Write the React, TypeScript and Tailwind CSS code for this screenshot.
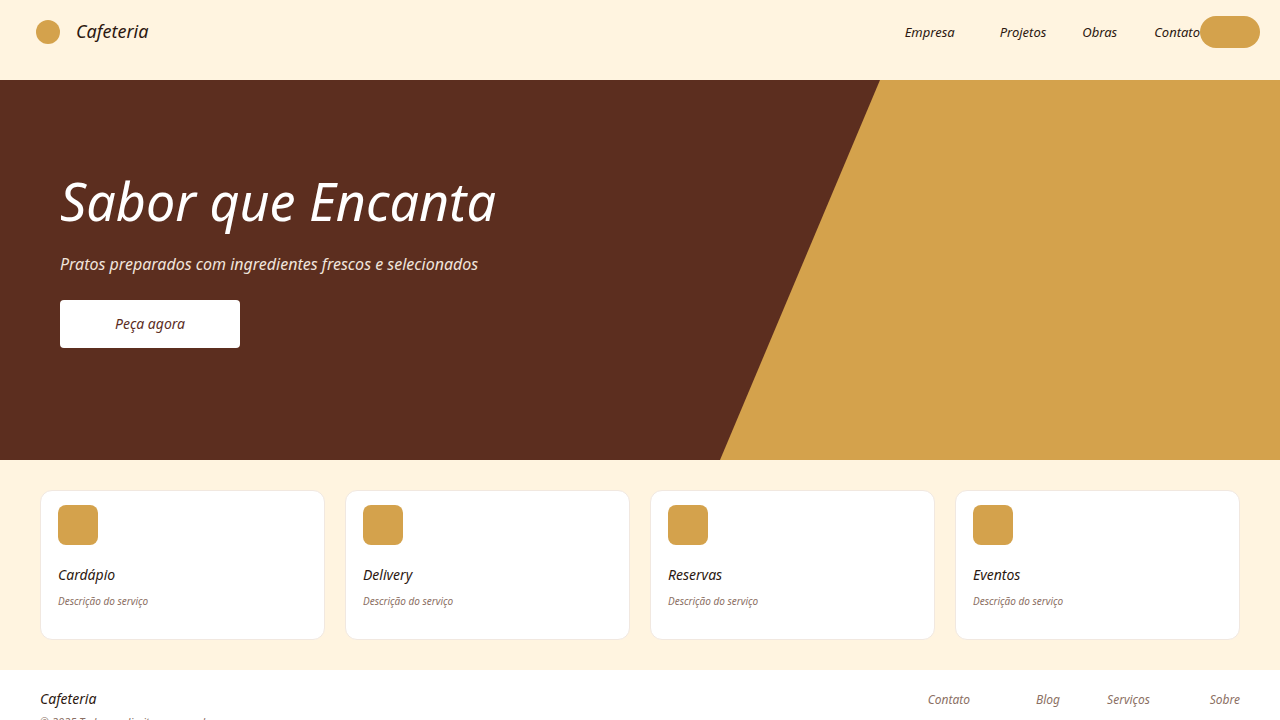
const font = "font-['Noto_Sans',sans-serif] italic";

function Card({ title }: { title: string }) {
  return (
    <div className="h-[150px] rounded-xl border border-[#f1e8e0] bg-white px-[17px] pt-[14px]">
      <div className="h-10 w-10 rounded-lg bg-[#d4a24c]" />
      <h3 className="mt-5 text-sm leading-5 text-[#2c1810]">{title}</h3>
      <p className="mt-[9px] text-[10px] leading-[14px] text-[#8b6f63]">Descrição do serviço</p>
    </div>
  );
}

export default function App() {
  return (
    <div className={`h-[720px] w-[1280px] overflow-hidden bg-[#fff4e0] opacity-[0.999] ${font}`}>
      <header className="flex h-20 items-start justify-between px-5 pt-4">
        <div className="flex h-8 items-center">
          <div className="ml-4 h-6 w-6 rounded-full bg-[#d4a24c]" />
          <span className="mb-0.5 ml-4 text-lg leading-7 text-[#2c1810]">Cafeteria</span>
        </div>
        <nav className="flex h-8 items-center text-[13px] text-[#2c1810]">
          <a className="mr-[45px] pt-0.5">Empresa</a>
          <a className="mr-[36px] pt-0.5">Projetos</a>
          <a className="mr-[37px] pt-0.5">Obras</a>
          <a className="pt-0.5">Contato</a>
          <div className="h-8 w-[60px] rounded-full bg-[#d4a24c]" />
        </nav>
      </header>
      <section className="relative h-[380px] bg-[#5c2e1f] pl-[60px] pt-[87px]">
        <div className="absolute inset-y-0 right-0 w-[560px] bg-[#d4a24c] [clip-path:polygon(160px_0,100%_0,100%_100%,0_100%)]" />
        <h1 className="text-[52px] leading-[68px] text-white">Sabor que Encanta</h1>
        <p className="mt-[17px] text-base leading-6 text-[#f0e4dc]">Pratos preparados com ingredientes frescos e selecionados</p>
        <button className="mt-[24px] block h-12 w-[180px] rounded bg-white text-sm italic text-[#5c2e1f]">Peça agora</button>
      </section>
      <section className="grid h-[210px] grid-cols-4 gap-5 px-10 pt-[30px]">
        <Card title="Cardápio" />
        <Card title="Delivery" />
        <Card title="Reservas" />
        <Card title="Eventos" />
      </section>
      <footer className="flex h-[50px] justify-between bg-white px-10 pt-[19px]">
        <div>
          <div className="text-sm leading-5 text-[#2c1810]">Cafeteria</div>
          <div className="mt-1.5 text-[11px] leading-[14px] text-[#8b6f63]">© 2025 Todos os direitos reservados</div>
        </div>
        <nav className="mt-px grid h-5 grid-cols-[70px_70px_70px_70px] gap-5 text-right text-xs leading-5 text-[#8b6f63]">
          <a>Contato</a>
          <a>Blog</a>
          <a>Serviços</a>
          <a>Sobre</a>
        </nav>
      </footer>
    </div>
  );
}
